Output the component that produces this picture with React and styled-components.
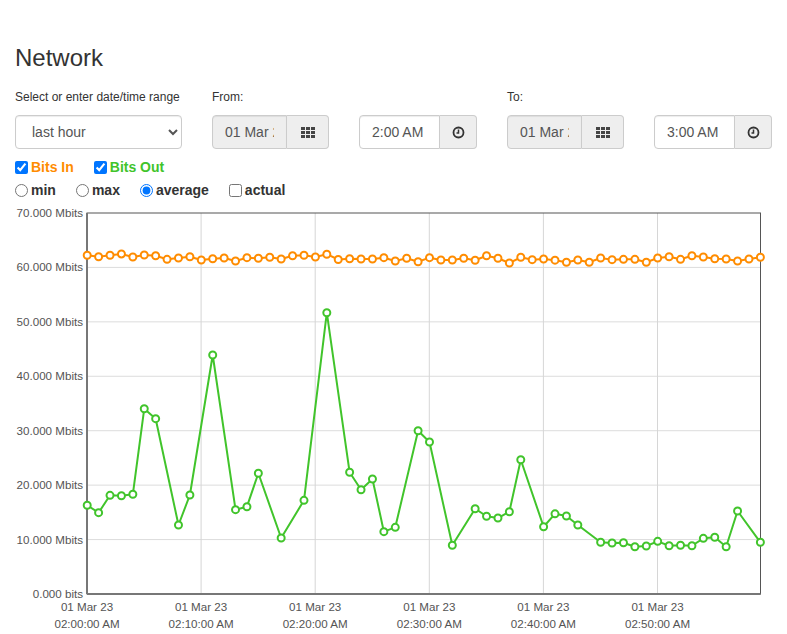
import React from "react";
import styled, { createGlobalStyle } from "styled-components";

const GlobalStyle = createGlobalStyle`
  html, body { margin: 0; padding: 0; background: #fff; }
  body {
    font-family: "Liberation Sans", Arial, Helvetica, sans-serif;
    font-size: 14px;
    color: #333;
  }
`;

const Container = styled.div`
  padding: 45px 15px 0;
  width: 787px;
  box-sizing: border-box;
`;

const Title = styled.h3`
  margin: 0;
  font-size: 24px;
  line-height: 26px;
  font-weight: 500;
  color: #333;
`;

const FormRow = styled.div`
  display: flex;
  gap: 30px;
  margin-top: 18px;
`;

const Field = styled.div`
  display: flex;
  flex-direction: column;
`;

const FieldLabel = styled.label`
  font-size: 12px;
  line-height: 17px;
  margin-bottom: 9px;
  color: #333;
`;

const RangeSelect = styled.select`
  width: 167px;
  height: 34px;
  box-sizing: border-box;
  border: 1px solid #ccc;
  border-radius: 4px;
  padding: 6px 8px 6px 12px;
  font-family: inherit;
  font-size: 14px;
  color: #555;
  background-color: #fff;
  box-shadow: inset 0 1px 1px rgba(0, 0, 0, 0.075);
`;

const Pair = styled.div`
  display: flex;
  gap: 30px;
`;

const InputGroup = styled.div`
  display: flex;
  height: 34px;
`;

const GroupInput = styled.input`
  width: ${(p) => p.$w}px;
  height: 34px;
  box-sizing: border-box;
  border: 1px solid #ccc;
  border-radius: 4px 0 0 4px;
  padding: 6px 12px;
  font-family: inherit;
  font-size: 14px;
  color: #555;
  background: ${(p) => (p.$muted ? "#eee" : "#fff")};
  box-shadow: inset 0 1px 1px rgba(0, 0, 0, 0.075);
  outline: none;
`;

const Addon = styled.span`
  width: ${(p) => p.$w}px;
  height: 34px;
  box-sizing: border-box;
  display: flex;
  align-items: center;
  justify-content: center;
  background: #eee;
  border: 1px solid #ccc;
  border-left: 0;
  border-radius: 0 4px 4px 0;
  color: #333;
`;

const OptionRow = styled.div`
  display: flex;
  align-items: center;
  height: 20px;
  margin-top: ${(p) => p.$mt}px;
`;

const Option = styled.label`
  display: inline-flex;
  align-items: center;
  font-weight: bold;
  font-size: 14px;
  line-height: 20px;
  margin-right: 20px;
  color: ${(p) => p.$color || "#333"};

  input {
    margin: 0 3px 0 0;
    width: 13px;
    height: 13px;
  }
`;

const ChartSvg = styled.svg`
  display: block;
  margin: 3px 0 0 -15px;
  overflow: visible;
`;

const GridIcon = () => (
  <svg width="14" height="11" viewBox="0 0 14 11">
    {[0, 1, 2].map((r) =>
      [0, 1, 2].map((c) => (
        <rect key={`${r}-${c}`} x={c * 5} y={r * 4} width="4" height="3" fill="#444" />
      ))
    )}
  </svg>
);

const ClockIcon = () => (
  <svg width="13" height="13" viewBox="0 0 13 13">
    <circle cx="6.5" cy="6.5" r="5" fill="none" stroke="#333" strokeWidth="1.8" />
    <path d="M6.5 3.5 V7 H4.5" fill="none" stroke="#333" strokeWidth="1.5" />
  </svg>
);

const ORANGE = "#ff8c00";
const GREEN = "#41c42b";

const bitsIn = [
  62.23, 61.97, 62.23, 62.47, 61.91, 62.28, 62.15, 61.49, 61.73, 61.97,
  61.36, 61.6, 61.73, 61.18, 61.79, 61.68, 61.86, 61.55, 62.15, 62.23,
  61.91, 62.43, 61.46, 61.6, 61.55, 61.55, 61.79, 61.18, 61.68, 61.05,
  61.79, 61.36, 61.36, 61.68, 61.31, 62.15, 61.68, 60.81, 61.86, 61.42,
  61.55, 61.33, 60.94, 61.36, 60.94, 61.73, 61.42, 61.49, 61.49, 60.94,
  61.73, 61.97, 61.49, 62.15, 61.91, 61.6, 61.55, 61.18, 61.55, 61.86,
].map((v, i) => [i, v]);

const bitsOut = [
  [0, 16.3], [1, 14.94], [2, 18.13], [3, 18.06], [4, 18.32], [5, 34.04],
  [6, 32.21], [8, 12.68], [9, 18.19], [11, 43.91], [13, 15.49], [14, 16.04],
  [15, 22.18], [17, 10.29], [19, 17.21], [21, 51.68], [23, 22.36], [24, 19.16],
  [25, 21.13], [26, 11.45], [27, 12.25], [29, 30.0], [30, 27.93], [32, 8.95],
  [34, 15.67], [35, 14.28], [36, 13.96], [37, 15.12], [38, 24.67], [40, 12.36],
  [41, 14.73], [42, 14.33], [43, 12.68], [45, 9.5], [46, 9.37], [47, 9.42],
  [48, 8.69], [49, 8.82], [50, 9.68], [51, 8.87], [52, 8.95], [53, 8.87],
  [54, 10.23], [55, 10.42], [56, 8.69], [57, 15.25], [59, 9.5],
];

const PLOT = { left: 87, right: 760.5, top: 213, bottom: 594 };
const xAt = (i) => 87.2 + i * 11.41;
const yAt = (v) => PLOT.bottom - v * 5.443;
const Y0 = 203;

const yTicks = [0, 10, 20, 30, 40, 50, 60, 70];
const xTicks = ["02:00:00 AM", "02:10:00 AM", "02:20:00 AM", "02:30:00 AM", "02:40:00 AM", "02:50:00 AM"];

const Series = ({ data, color }) => (
  <g>
    <polyline
      points={data.map(([i, v]) => `${xAt(i)},${yAt(v)}`).join(" ")}
      fill="none"
      stroke={color}
      strokeWidth="2"
      strokeLinejoin="round"
    />
    {data.map(([i, v]) => (
      <circle key={i} cx={xAt(i)} cy={yAt(v)} r="3.5" fill="#fff" stroke={color} strokeWidth="2" />
    ))}
  </g>
);

const Chart = () => (
  <ChartSvg width="787" height="431" viewBox={`0 ${Y0} 787 431`}>
    {yTicks.slice(1, -1).map((v) => (
      <line key={v} x1={PLOT.left} x2={PLOT.right} y1={yAt(v)} y2={yAt(v)} stroke="#dcdcdc" strokeWidth="1" />
    ))}
    {xTicks.slice(1).map((_, k) => {
      const x = PLOT.left + (k + 1) * 114.1;
      return <line key={k} x1={x} x2={x} y1={PLOT.top} y2={PLOT.bottom} stroke="#d6d6d6" strokeWidth="1" />;
    })}
    <rect
      x={PLOT.left}
      y={PLOT.top}
      width={PLOT.right - PLOT.left}
      height={PLOT.bottom - PLOT.top}
      fill="none"
      stroke="#555"
      strokeWidth="1"
    />
    <line x1={PLOT.left} x2={PLOT.left} y1={PLOT.top} y2={PLOT.bottom} stroke="#777" strokeWidth="2" />
    <line x1={PLOT.left} x2={PLOT.right} y1={PLOT.bottom} y2={PLOT.bottom} stroke="#777" strokeWidth="2" />
    {yTicks.map((v) => (
      <text
        key={v}
        x="83"
        y={yAt(v) + 4}
        textAnchor="end"
        fontSize="11.6"
        fontFamily='"Liberation Sans", Arial, sans-serif'
        fill="#545454"
      >
        {v === 0 ? "0.000 bits" : `${v}.000 Mbits`}
      </text>
    ))}
    {xTicks.map((t, k) => {
      const x = PLOT.left + k * 114.1;
      return (
        <text
          key={t}
          x={x}
          textAnchor="middle"
          fontSize="11.6"
          fontFamily='"Liberation Sans", Arial, sans-serif'
          fill="#545454"
        >
          <tspan x={x} y="611">01 Mar 23</tspan>
          <tspan x={x} y="628">{t}</tspan>
        </text>
      );
    })}
    <Series data={bitsIn} color={ORANGE} />
    <Series data={bitsOut} color={GREEN} />
  </ChartSvg>
);

const DateTime = ({ date, time }) => (
  <Pair>
    <InputGroup>
      <GroupInput $w={75} $muted readOnly value={date} />
      <Addon $w={42}>
        <GridIcon />
      </Addon>
    </InputGroup>
    <InputGroup>
      <GroupInput $w={81} readOnly value={time} />
      <Addon $w={37}>
        <ClockIcon />
      </Addon>
    </InputGroup>
  </Pair>
);

export default function App() {
  return (
    <>
      <GlobalStyle />
      <Container>
        <Title>Network</Title>
        <FormRow>
          <Field>
            <FieldLabel>Select or enter date/time range</FieldLabel>
            <RangeSelect defaultValue="hour">
              <option value="hour">last hour</option>
              <option value="day">last day</option>
              <option value="week">last week</option>
            </RangeSelect>
          </Field>
          <Field>
            <FieldLabel>From:</FieldLabel>
            <DateTime date="01 Mar 2023" time="2:00 AM" />
          </Field>
          <Field>
            <FieldLabel>To:</FieldLabel>
            <DateTime date="01 Mar 2023" time="3:00 AM" />
          </Field>
        </FormRow>
        <OptionRow $mt={8}>
          <Option $color={ORANGE}>
            <input type="checkbox" defaultChecked />
            Bits In
          </Option>
          <Option $color={GREEN}>
            <input type="checkbox" defaultChecked />
            Bits Out
          </Option>
        </OptionRow>
        <OptionRow $mt={3}>
          <Option>
            <input type="radio" name="agg" />
            min
          </Option>
          <Option>
            <input type="radio" name="agg" />
            max
          </Option>
          <Option>
            <input type="radio" name="agg" defaultChecked />
            average
          </Option>
          <Option>
            <input type="checkbox" />
            actual
          </Option>
        </OptionRow>
        <Chart />
      </Container>
    </>
  );
}
